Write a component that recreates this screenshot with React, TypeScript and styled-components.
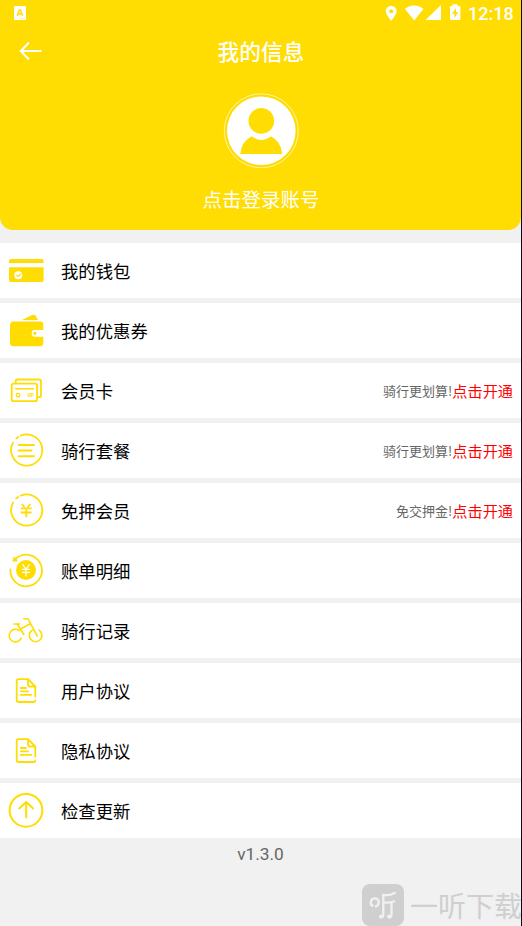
import React from 'react';
import styled, { createGlobalStyle } from 'styled-components';

const YELLOW = '#ffdd03';

const GlobalStyle = createGlobalStyle`
  body { margin: 0; background: #f1f1f1; }
  * { box-sizing: border-box; }
`;

const Screen = styled.div`
  position: relative;
  width: 522px;
  height: 926px;
  overflow: hidden;
  background: #f1f1f1;
  border-right: 1px solid #0b0b10;
  font-family: "Noto Sans CJK SC", sans-serif;
`;

const Header = styled.header`
  height: 230px;
  background: ${YELLOW};
  border-radius: 0 0 13px 13px;
  color: #fff;
`;

const StatusBar = styled.div`
  display: flex;
  align-items: center;
  justify-content: space-between;
  height: 27px;
  padding: 0 8px 0 13px;
`;

const StatusRight = styled.div`
  display: flex;
  align-items: center;
`;

const Clock = styled.span`
  width: 45px;
  margin-left: 6px;
  font: 500 18px/27px Roboto, sans-serif;
  white-space: nowrap;
`;

const TitleBar = styled.div`
  display: grid;
  grid-template-columns: 61px 1fr 60px;
  align-items: center;
  height: 48px;
`;

const BackButton = styled.button`
  display: flex;
  padding: 0 0 0 18px;
  border: 0;
  background: none;
`;

const Title = styled.h1`
  margin: 0;
  font-size: 21.7px;
  line-height: 30px;
  font-weight: 500;
  text-align: center;
`;

const Account = styled.div`
  display: flex;
  flex-direction: column;
  align-items: center;
  padding-top: 17px;
`;

const LoginText = styled.span`
  margin-top: 16px;
  padding-left: 1px;
  font-size: 19.5px;
  line-height: 30px;
`;

const Menu = styled.main`
  display: flex;
  flex-direction: column;
  gap: 5.3px;
  padding-top: 13px;
`;

const Row = styled.div`
  display: flex;
  align-items: center;
  height: 54.7px;
  padding-right: 8px;
  background: #fff;
`;

const IconBox = styled.svg`
  flex: none;
  width: 61px;
  height: 54px;
  fill: none;
  stroke: ${YELLOW};
  stroke-width: 1.8;
  stroke-linecap: round;
  stroke-linejoin: round;
`;

const Label = styled.span`
  flex: 1;
  padding-top: 1px;
  color: #000;
  font-size: 17.35px;
  line-height: 26px;
`;

const Hint = styled.span`
  padding-top: 1px;
  color: #666;
  font-size: 13px;
  line-height: 24px;
`;

const Action = styled.span`
  color: #f00;
  font-size: 15.2px;
  line-height: 24px;
`;

const Version = styled.div`
  margin-top: 4px;
  color: #666;
  font: 17.3px/24px Roboto, sans-serif;
  text-align: center;
`;

const Watermark = styled.div`
  position: absolute;
  left: 362px;
  top: 884px;
  display: flex;
  align-items: center;
  gap: 6px;
  height: 42px;
  color: #cfcfcf;
  white-space: nowrap;
`;

const WatermarkText = styled.span`
  font-size: 28px;
  line-height: 42px;
`;

const DocIcon = () => (
  <>
    <path d="M35.3 33.5V23.5L28 16.1H18.5Q16.7 16.1 16.7 18V37Q16.7 39 18.5 39H33.5Q35.3 39 35.3 37.5M28 16.1V21.5Q28 23.5 30 23.5H35.3" />
    <path d="M20.8 25H26M20.8 28.4H28M20.8 31.8H31.3" />
  </>
);

const OpenRing = () => (
  <path d="M20.8 12.6A15.6 15.6 0 1 1 13 19.6M16.2 15.4L18.3 13.9" />
);

const icons: Record<string, React.ReactNode> = {
  wallet: (
    <g stroke="none" fill={YELLOW}>
      <path d="M9 20V18Q9 16 11 16H41.6Q43.6 16 43.6 18V20ZM9 24.3H43.6V36.8Q43.6 39 41.5 39H11Q9 39 9 36.8Z" />
      <circle cx="18.3" cy="32.2" r="4" fill="#fff" />
      <path d="M16.2 32.3L18 33.5L20.8 31" fill="none" stroke={YELLOW} strokeWidth="1.2" />
    </g>
  ),
  coupon: (
    <g stroke="none" fill={YELLOW}>
      <path d="M22 17L31.5 12.3Q34.5 11 36 13.2L38 17Z" />
      <path d="M13.5 18.5H40.4Q43.3 18.5 43.3 21.5V27H35A3.2 3.2 0 0 0 35 33.7H43.3V40Q43.3 43.2 40 43.2H13.5Q10 43.2 10 40V22Q10 18.5 13.5 18.5Z" />
      <circle cx="34.8" cy="30.3" r="1.6" />
    </g>
  ),
  card: (
    <>
      <path d="M15.7 20V18.4Q15.7 16.5 17.6 16.5H39Q41 16.5 41 18.4V32.2Q41 34.2 39 34.2H38" />
      <rect x="11.7" y="20.6" width="25.4" height="17.6" rx="2" />
      <path d="M15.4 25.8H33.5" strokeWidth="1.5" />
      <circle cx="18" cy="32.2" r="1.8" strokeWidth="1.3" />
      <text x="27.2" y="34.2" fill={YELLOW} stroke="none" fontSize="4.5" fontWeight="700" fontFamily="Roboto, sans-serif" textLength="6.6">VIP</text>
    </>
  ),
  package: (
    <>
      <OpenRing />
      <path d="M18.8 22H34M18.8 27.4H31.5M18.8 33.2H34" strokeWidth="2" />
    </>
  ),
  deposit: (
    <>
      <OpenRing />
      <path d="M22 21L24.5 24.3M30.3 21L27.7 24.3M20.8 25.3H31.6M20.8 29.5H31.6M26.3 25.3V34.3" strokeLinecap="butt" />
    </>
  ),
  bill: (
    <>
      <path d="M16.2 15.2A15.8 15.8 0 1 1 10.4 26.5" />
      <path d="M13.3 17.7L14.4 14.8L16.5 17.5Z" fill={YELLOW} />
      <circle cx="26" cy="27" r="10" fill={YELLOW} stroke="none" />
      <path d="M22.7 21.5L26 26.3L29.3 21.5M22.5 26.3H29.5M22.5 29.3H29.5M26 26.3V33" stroke="#fff" strokeWidth="1.2" />
    </>
  ),
  bike: (
    <g strokeWidth="1.6">
      <path d="M19.3 27.6A6.3 6.3 0 1 0 21.2 35.2M32.2 27.1A6.3 6.3 0 1 0 39 27.1" />
      <path d="M14 21H19.5M17.2 21L23.8 31.5M20 26.2L29.8 21M23.6 15.8H28L37.2 33" />
    </g>
  ),
  document: <DocIcon />,
  update: (
    <>
      <circle cx="26" cy="27.3" r="16.4" strokeWidth="2" />
      <path d="M26.2 34.5V19.3M19.2 25.4L26.2 19L33.2 25.4" strokeWidth="2" />
    </>
  ),
};

const rows = [
  { icon: 'wallet', label: '我的钱包' },
  { icon: 'coupon', label: '我的优惠券' },
  { icon: 'card', label: '会员卡', hint: '骑行更划算!' },
  { icon: 'package', label: '骑行套餐', hint: '骑行更划算!' },
  { icon: 'deposit', label: '免押会员', hint: '免交押金!' },
  { icon: 'bill', label: '账单明细' },
  { icon: 'bike', label: '骑行记录' },
  { icon: 'document', label: '用户协议' },
  { icon: 'document', label: '隐私协议' },
  { icon: 'update', label: '检查更新' },
];

export default function App() {
  return (
    <Screen>
      <GlobalStyle />
      <Header>
        <StatusBar>
          <svg width="14" height="27" viewBox="0 0 14 27">
            <rect x="1" y="6" width="12" height="14" rx="0.8" fill="#fff" />
            <path d="M4.2 16L6.2 10H7.5L9.5 16M5 14H8.8" fill="none" stroke={YELLOW} strokeWidth="1.4" />
            <path d="M7 18.5H12" stroke={YELLOW} strokeWidth="1" opacity="0.5" />
          </svg>
          <StatusRight>
            <svg width="77" height="27" viewBox="0 0 77 27" fill="#fff">
              <path fillRule="evenodd" d="M6.2 6C3.1 6 .8 8.2 .8 11.2C.8 14.8 6.2 20.7 6.2 20.7S11.6 14.8 11.6 11.2C11.6 8.2 9.3 6 6.2 6ZM6.2 9.2A2 2 0 1 1 6.2 13.2A2 2 0 1 1 6.2 9.2Z" />
              <path d="M19.8 8.8Q29.2 1.8 38.6 8.8L29.2 20.4Z" />
              <path d="M56 5V20H40.5Z" />
              <path d="M66 6H67.5V4.3H72.5V6H74.4Q75.4 6 75.4 7V19Q75.4 20 74.4 20H66Q65 20 65 19V7Q65 6 66 6Z" />
              <path d="M71 8L67 13.8H69.5V18L73.3 12.2H71Z" fill={YELLOW} />
            </svg>
            <Clock>12:18</Clock>
          </StatusRight>
        </StatusBar>
        <TitleBar>
          <BackButton aria-label="返回">
            <svg width="25" height="20" viewBox="0 0 25 20" fill="none" stroke="#fff" strokeWidth="2">
              <path d="M2.5 10H23.5M11 1.5L2.8 10L11 18.5" />
            </svg>
          </BackButton>
          <Title>我的信息</Title>
        </TitleBar>
        <Account>
          <svg width="76" height="76" viewBox="0 0 76 76">
            <circle cx="38.3" cy="38.8" r="37" fill="none" stroke="#fff" strokeOpacity="0.65" />
            <circle cx="38.3" cy="38.8" r="34.3" fill="#fff" />
            <circle cx="38.3" cy="28.9" r="12.8" fill={YELLOW} />
            <path d="M17.3 62Q18 49.5 28.8 44.2Q38.3 51.7 47.8 44.2Q58.4 49.5 59.2 62Z" fill={YELLOW} />
          </svg>
          <LoginText>点击登录账号</LoginText>
        </Account>
      </Header>
      <Menu>
        {rows.map((row) => (
          <Row key={row.label}>
            <IconBox viewBox="0 0 61 54">{icons[row.icon]}</IconBox>
            <Label>{row.label}</Label>
            {row.hint && <Hint>{row.hint}</Hint>}
            {row.hint && <Action>点击开通</Action>}
          </Row>
        ))}
      </Menu>
      <Version>v1.3.0</Version>
      <Watermark>
        <svg width="42" height="42" viewBox="0 0 42 42" fill="none" stroke="#f1f1f1" strokeWidth="2">
          <rect width="42" height="42" rx="8" fill="#cfcfcf" stroke="none" />
          <path d="M11.5 22.2A4 4 0 1 1 16.8 18.2Q16.8 22 13 22.5" strokeWidth="2.3" />
          <path d="M33.5 8.5Q28 12 21.3 11V30Q21.3 33.5 19.3 33.5M21.3 18.5Q28 19 33 17M29.5 18V30Q29.5 33.5 27.3 33.5" strokeWidth="2.3" />
          <circle cx="19" cy="32.5" r="2" fill="#f1f1f1" stroke="none" />
          <circle cx="27" cy="32.5" r="2" fill="#f1f1f1" stroke="none" />
        </svg>
        <WatermarkText>一听下载</WatermarkText>
      </Watermark>
    </Screen>
  );
}
